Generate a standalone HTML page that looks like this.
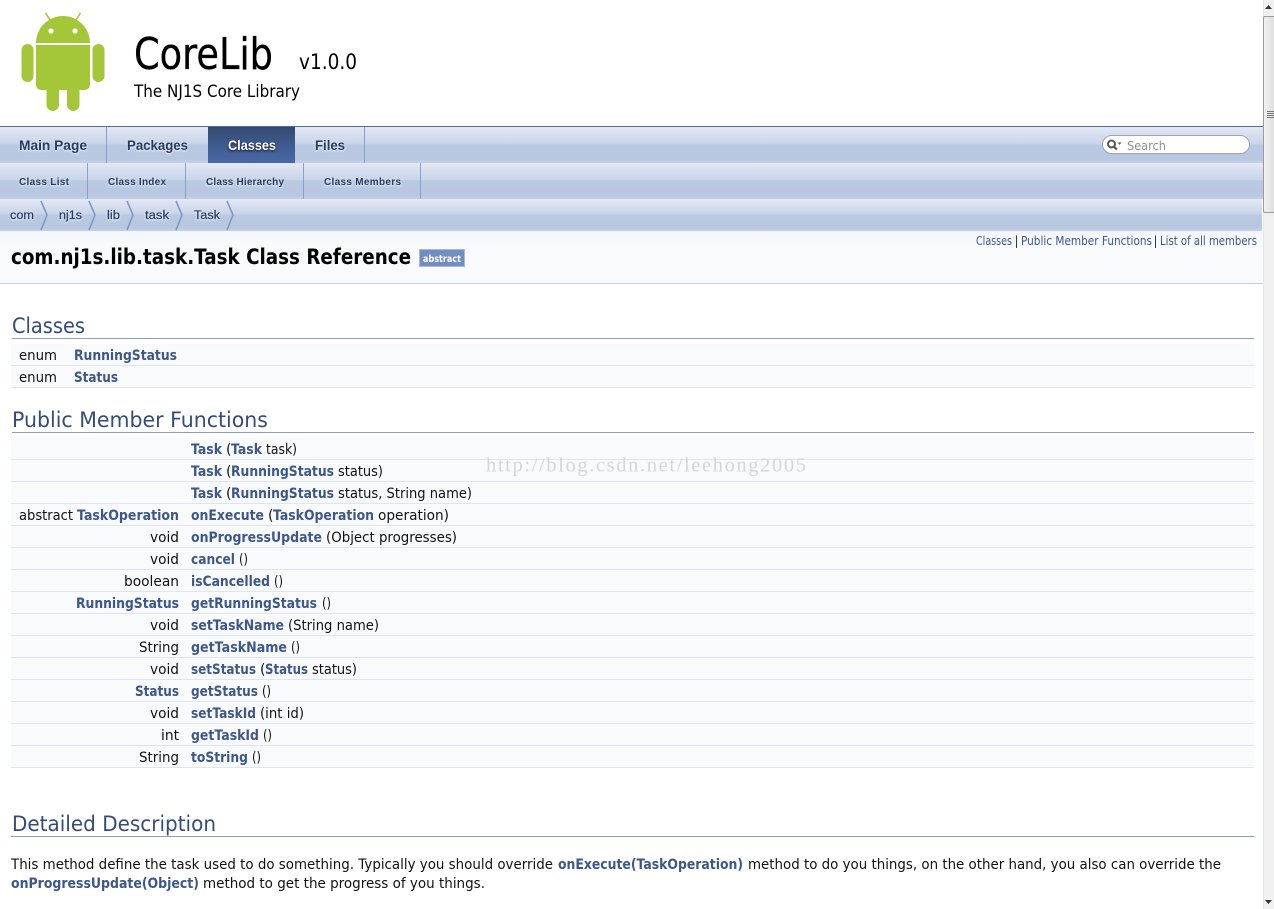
<!DOCTYPE html>
<html lang="en">
<head>
<meta charset="utf-8">
<title>CoreLib: com.nj1s.lib.task.Task Class Reference</title>
<style>
html,body{margin:0;padding:0;background:#fff;overflow:hidden;width:1274px;height:909px}
svg{display:block}
text{font-family:"DejaVu Sans",sans-serif;font-size:14px;fill:#111;white-space:pre}
.b{font-weight:700;fill:#3d578c}
.h{font-size:21px;fill:#354c7b}
.n{font-family:"Liberation Sans",sans-serif;font-weight:700;fill:#283a5d}
.c{font-family:"Liberation Sans",sans-serif;fill:#283a5d}
.l{font-size:12px;fill:#3d578c}
.sep{fill:#8aa0cc}
.row{fill:#f9fafc}
.bd{fill:#dee4f0}
.halo{filter:drop-shadow(0 1px 1px rgba(255,255,255,.9))}
</style>
</head>
<body>
<svg xmlns="http://www.w3.org/2000/svg" width="1274" height="909" viewBox="0 0 1274 909">
<defs>
<linearGradient id="tab" x1="0" y1="0" x2="0" y2="1">
<stop offset="0" stop-color="#e3e8f3"/><stop offset=".46" stop-color="#c9d5e9"/><stop offset=".5" stop-color="#b9c9e2"/><stop offset=".9" stop-color="#b9c8e1"/><stop offset="1" stop-color="#c5d1e6"/>
</linearGradient>
<linearGradient id="act" x1="0" y1="0" x2="0" y2="1">
<stop offset="0" stop-color="#35486f"/><stop offset=".5" stop-color="#3f5a90"/><stop offset="1" stop-color="#4a68a6"/>
</linearGradient>
<linearGradient id="hd" x1="0" y1="0" x2="0" y2="1">
<stop offset="0" stop-color="#f3f5fa"/><stop offset=".25" stop-color="#f9fafc"/><stop offset="1" stop-color="#f9fafc"/>
</linearGradient>
<linearGradient id="thumb" x1="0" y1="0" x2="1" y2="0">
<stop offset="0" stop-color="#f2f2f2"/><stop offset="1" stop-color="#dcdcdc"/>
</linearGradient>
</defs>

<!-- Android logo -->
<g fill="#a4c639">
<path d="M36 43a27 27 0 0 1 54 0z"/>
<path d="M36 45h54v40a5 5 0 0 1-5 5H41a5 5 0 0 1-5-5z"/>
<rect x="21.500" y="44" width="12" height="38" rx="6"/>
<rect x="92.500" y="44" width="12" height="38" rx="6"/>
<rect x="46.500" y="84" width="12.500" height="27" rx="6.200"/>
<rect x="67" y="84" width="12.500" height="27" rx="6.200"/>
</g>
<path d="M52 23 45.500 13M74 23l6.500-10" stroke="#a4c639" stroke-width="1.600" fill="none"/>
<circle cx="51" cy="31" r="2.600" fill="#fff"/><circle cx="75" cy="31" r="2.600" fill="#fff"/>

<!-- Project title -->
<text x="134" y="69" style="font-size:44px;fill:#000;stroke:#000;stroke-width:.3px" textLength="139" lengthAdjust="spacingAndGlyphs">CoreLib</text>
<text x="299" y="69" style="font-size:21px;fill:#000" textLength="58" lengthAdjust="spacingAndGlyphs">v1.0.0</text>
<text x="134" y="97" style="font-size:17px;fill:#000" textLength="166" lengthAdjust="spacingAndGlyphs">The NJ1S Core Library</text>

<!-- Nav rows -->
<rect x="0" y="126" width="1263" height="1" fill="#4a6cb0"/>
<rect x="0" y="127" width="1263" height="36" fill="url(#tab)"/>
<rect x="0" y="163" width="1263" height="36" fill="url(#tab)"/>
<rect x="0" y="199" width="1262" height="32" fill="url(#tab)"/>
<rect x="208" y="127" width="87" height="36" fill="url(#act)"/>
<rect class="sep" x="106" y="127" width="1" height="36"/>
<rect class="sep" x="364" y="127" width="1" height="36"/>
<g class="halo">
<text class="n" x="19" y="150" style="font-size:13.500px" textLength="68" lengthAdjust="spacingAndGlyphs">Main Page</text>
<text class="n" x="127" y="150" style="font-size:13.500px" textLength="61" lengthAdjust="spacingAndGlyphs">Packages</text>
<text class="n" x="315" y="150" style="font-size:13.500px" textLength="30" lengthAdjust="spacingAndGlyphs">Files</text>
</g>
<g style="filter:drop-shadow(0 1px 1px #111)"><text class="n" x="228" y="150" style="font-size:13.500px;fill:#fff" textLength="48" lengthAdjust="spacingAndGlyphs">Classes</text></g>

<rect class="sep" x="87" y="163" width="1" height="36"/>
<rect class="sep" x="185" y="163" width="1" height="36"/>
<rect class="sep" x="303" y="163" width="1" height="36"/>
<rect class="sep" x="420" y="163" width="1" height="36"/>
<g class="halo">
<text class="n" x="19" y="185" style="font-size:10px" textLength="50" lengthAdjust="spacing">Class List</text>
<text class="n" x="108" y="185" style="font-size:10px" textLength="58" lengthAdjust="spacing">Class Index</text>
<text class="n" x="206" y="185" style="font-size:10px" textLength="78" lengthAdjust="spacing">Class Hierarchy</text>
<text class="n" x="324" y="185" style="font-size:10px" textLength="77" lengthAdjust="spacing">Class Members</text>
</g>

<!-- Breadcrumb -->
<g fill="none" stroke="#7f98c8" stroke-width="1.600">
<path d="M41 201l6 14-6 15"/><path d="M89 201l6 14-6 15"/><path d="M127 201l6 14-6 15"/><path d="M176 201l6 14-6 15"/><path d="M227 201l6 14-6 15"/>
</g>
<g class="halo" style="stroke:#283a5d;stroke-width:.2px">
<text class="c" x="10" y="219" style="font-size:11.500px" textLength="24" lengthAdjust="spacingAndGlyphs">com</text>
<text class="c" x="59" y="219" style="font-size:11.500px" textLength="23" lengthAdjust="spacingAndGlyphs">nj1s</text>
<text class="c" x="107" y="219" style="font-size:11.500px" textLength="13" lengthAdjust="spacingAndGlyphs">lib</text>
<text class="c" x="145" y="219" style="font-size:11.500px" textLength="24" lengthAdjust="spacingAndGlyphs">task</text>
<text class="c" x="194" y="219" style="font-size:11.500px" textLength="26" lengthAdjust="spacingAndGlyphs">Task</text>
</g>

<!-- Search -->
<rect x="1102.500" y="135.500" width="147" height="18" rx="9" fill="#fff" stroke="#a3a3a3"/>
<circle cx="1111.500" cy="144" r="3.500" fill="none" stroke="#555" stroke-width="2"/>
<path d="M1114 146.500l2.800 3" stroke="#555" stroke-width="2.200"/>
<path d="M1117.500 142.500h4l-2 2.300z" fill="#555"/>
<text x="1127" y="150" style="font-size:12px;fill:#909090" textLength="39" lengthAdjust="spacingAndGlyphs">Search</text>

<!-- Header -->
<rect x="0" y="231" width="1263" height="52" fill="url(#hd)"/>
<rect x="0" y="283" width="1263" height="1" fill="#c4cfe5"/>
<text x="11" y="264" style="font-size:21px;font-weight:700;fill:#000" textLength="400" lengthAdjust="spacingAndGlyphs">com.nj1s.lib.task.Task Class Reference</text>
<rect x="419" y="249" width="46" height="18" rx="1" fill="#728dc1"/>
<rect x="419.500" y="249.500" width="45" height="17" rx="1" fill="none" stroke="#a8b8d9"/>
<text x="423" y="262" style="font-size:9.500px;font-weight:700;fill:#fff" textLength="38" lengthAdjust="spacingAndGlyphs">abstract</text>
<text class="l" x="976" y="245" textLength="36" lengthAdjust="spacingAndGlyphs">Classes</text>
<text x="1014.500" y="245" style="font-size:12px;fill:#333">|</text>
<text class="l" x="1021" y="245" textLength="131" lengthAdjust="spacingAndGlyphs">Public Member Functions</text>
<text x="1153.500" y="245" style="font-size:12px;fill:#333">|</text>
<text class="l" x="1160" y="245" textLength="97" lengthAdjust="spacingAndGlyphs">List of all members</text>

<!-- Classes -->
<text class="h" x="12" y="333" textLength="73" lengthAdjust="spacingAndGlyphs">Classes</text>
<rect x="12" y="338" width="1242" height="1" fill="#879ecb"/>
<rect class="row" x="11" y="344" width="1243" height="43"/>
<rect class="bd" x="11" y="365" width="1243" height="1"/>
<rect class="bd" x="11" y="387" width="1243" height="1"/>
<text x="19" y="360" textLength="38" lengthAdjust="spacingAndGlyphs">enum</text>
<text class="b" x="74" y="360" textLength="103" lengthAdjust="spacingAndGlyphs">RunningStatus</text>
<text x="19" y="382" textLength="38" lengthAdjust="spacingAndGlyphs">enum</text>
<text class="b" x="74" y="382" textLength="44" lengthAdjust="spacingAndGlyphs">Status</text>

<!-- Public Member Functions -->
<text class="h" x="12" y="427" textLength="256" lengthAdjust="spacingAndGlyphs">Public Member Functions</text>
<rect x="12" y="432" width="1242" height="1" fill="#879ecb"/>
<rect class="row" x="11" y="438" width="1243" height="330"/>
<g class="bd">
<rect x="11" y="459" width="1243" height="1"/><rect x="11" y="481" width="1243" height="1"/><rect x="11" y="503" width="1243" height="1"/><rect x="11" y="525" width="1243" height="1"/><rect x="11" y="547" width="1243" height="1"/><rect x="11" y="569" width="1243" height="1"/><rect x="11" y="591" width="1243" height="1"/><rect x="11" y="613" width="1243" height="1"/><rect x="11" y="635" width="1243" height="1"/><rect x="11" y="657" width="1243" height="1"/><rect x="11" y="679" width="1243" height="1"/><rect x="11" y="701" width="1243" height="1"/><rect x="11" y="723" width="1243" height="1"/><rect x="11" y="745" width="1243" height="1"/><rect x="11" y="767" width="1243" height="1"/>
</g>

<text class="b" x="191" y="454" textLength="31" lengthAdjust="spacingAndGlyphs">Task</text><text x="226" y="454">(</text><text class="b" x="231" y="454" textLength="31" lengthAdjust="spacingAndGlyphs">Task</text><text x="266" y="454" textLength="31" lengthAdjust="spacingAndGlyphs">task)</text>

<text class="b" x="191" y="476" textLength="31" lengthAdjust="spacingAndGlyphs">Task</text><text x="226" y="476">(</text><text class="b" x="231" y="476" textLength="103" lengthAdjust="spacingAndGlyphs">RunningStatus</text><text x="338" y="476" textLength="45" lengthAdjust="spacingAndGlyphs">status)</text>

<text class="b" x="191" y="498" textLength="31" lengthAdjust="spacingAndGlyphs">Task</text><text x="226" y="498">(</text><text class="b" x="231" y="498" textLength="103" lengthAdjust="spacingAndGlyphs">RunningStatus</text><text x="338" y="498" textLength="134" lengthAdjust="spacingAndGlyphs">status, String name)</text>

<text x="19" y="520" textLength="54" lengthAdjust="spacingAndGlyphs">abstract</text><text class="b" x="77" y="520" textLength="102" lengthAdjust="spacingAndGlyphs">TaskOperation</text><text class="b" x="191" y="520" textLength="73" lengthAdjust="spacingAndGlyphs">onExecute</text><text x="268" y="520">(</text><text class="b" x="273" y="520" textLength="101" lengthAdjust="spacingAndGlyphs">TaskOperation</text><text x="378" y="520" textLength="71" lengthAdjust="spacingAndGlyphs">operation)</text>

<text x="150" y="542" textLength="29" lengthAdjust="spacingAndGlyphs">void</text><text class="b" x="191" y="542" textLength="131" lengthAdjust="spacingAndGlyphs">onProgressUpdate</text><text x="326" y="542" textLength="131" lengthAdjust="spacingAndGlyphs">(Object progresses)</text>

<text x="150" y="564" textLength="29" lengthAdjust="spacingAndGlyphs">void</text><text class="b" x="191" y="564" textLength="44" lengthAdjust="spacingAndGlyphs">cancel</text><text x="239" y="564" textLength="9" lengthAdjust="spacingAndGlyphs">()</text>

<text x="124" y="586" textLength="55" lengthAdjust="spacingAndGlyphs">boolean</text><text class="b" x="191" y="586" textLength="79" lengthAdjust="spacingAndGlyphs">isCancelled</text><text x="274" y="586" textLength="9" lengthAdjust="spacingAndGlyphs">()</text>

<text class="b" x="76" y="608" textLength="103" lengthAdjust="spacingAndGlyphs">RunningStatus</text><text class="b" x="191" y="608" textLength="126" lengthAdjust="spacingAndGlyphs">getRunningStatus</text><text x="322" y="608" textLength="9" lengthAdjust="spacingAndGlyphs">()</text>

<text x="150" y="630" textLength="29" lengthAdjust="spacingAndGlyphs">void</text><text class="b" x="191" y="630" textLength="93" lengthAdjust="spacingAndGlyphs">setTaskName</text><text x="288" y="630" textLength="91" lengthAdjust="spacingAndGlyphs">(String name)</text>

<text x="139" y="652" textLength="40" lengthAdjust="spacingAndGlyphs">String</text><text class="b" x="191" y="652" textLength="96" lengthAdjust="spacingAndGlyphs">getTaskName</text><text x="291" y="652" textLength="9" lengthAdjust="spacingAndGlyphs">()</text>

<text x="150" y="674" textLength="29" lengthAdjust="spacingAndGlyphs">void</text><text class="b" x="191" y="674" textLength="65" lengthAdjust="spacingAndGlyphs">setStatus</text><text x="260" y="674">(</text><text class="b" x="265" y="674" textLength="43" lengthAdjust="spacingAndGlyphs">Status</text><text x="312" y="674" textLength="45" lengthAdjust="spacingAndGlyphs">status)</text>

<text class="b" x="135" y="696" textLength="44" lengthAdjust="spacingAndGlyphs">Status</text><text class="b" x="191" y="696" textLength="67" lengthAdjust="spacingAndGlyphs">getStatus</text><text x="262" y="696" textLength="9" lengthAdjust="spacingAndGlyphs">()</text>

<text x="150" y="718" textLength="29" lengthAdjust="spacingAndGlyphs">void</text><text class="b" x="191" y="718" textLength="65" lengthAdjust="spacingAndGlyphs">setTaskId</text><text x="260" y="718" textLength="44" lengthAdjust="spacingAndGlyphs">(int id)</text>

<text x="161" y="740" textLength="18" lengthAdjust="spacingAndGlyphs">int</text><text class="b" x="191" y="740" textLength="68" lengthAdjust="spacingAndGlyphs">getTaskId</text><text x="263" y="740" textLength="9" lengthAdjust="spacingAndGlyphs">()</text>

<text x="139" y="762" textLength="40" lengthAdjust="spacingAndGlyphs">String</text><text class="b" x="191" y="762" textLength="57" lengthAdjust="spacingAndGlyphs">toString</text><text x="252" y="762" textLength="9" lengthAdjust="spacingAndGlyphs">()</text>

<!-- Watermark -->
<text x="486" y="471.500" style="font-family:'Liberation Serif',serif;font-size:20.500px;fill:#d6d6d6" textLength="320" lengthAdjust="spacing">http://blog.csdn.net/leehong2005</text>

<!-- Detailed Description -->
<text class="h" x="12" y="831" textLength="204" lengthAdjust="spacingAndGlyphs">Detailed Description</text>
<rect x="11" y="836" width="1243" height="1" fill="#879ecb"/>
<text x="11" y="869" textLength="542" lengthAdjust="spacingAndGlyphs">This method define the task used to do something. Typically you should override</text>
<text class="b" x="558" y="869" textLength="185" lengthAdjust="spacingAndGlyphs">onExecute(TaskOperation)</text>
<text x="748" y="869" textLength="473" lengthAdjust="spacingAndGlyphs">method to do you things, on the other hand, you also can override the</text>
<text class="b" x="11" y="888" textLength="188" lengthAdjust="spacingAndGlyphs">onProgressUpdate(Object)</text>
<text x="203" y="888" textLength="282" lengthAdjust="spacingAndGlyphs">method to get the progress of you things.</text>

<!-- Scrollbar -->
<rect x="1263" y="0" width="11" height="909" fill="#f0f0f0"/>
<rect x="1263" y="0" width="1" height="909" fill="#e6e6e6"/>
<path d="M1268.500 5l3.500 4h-7z" fill="#333"/>
<rect x="1263.500" y="16.500" width="12" height="196" rx="1.500" fill="url(#thumb)" stroke="#9a9a9a"/>
<path d="M1267 111.500h7M1267 113.500h7M1267 115.500h7M1267 117.500h7" stroke="#777" stroke-width="1"/>
<path d="M1268.500 904l3.500-4h-7z" fill="#333"/>
</svg>
</body>
</html>
